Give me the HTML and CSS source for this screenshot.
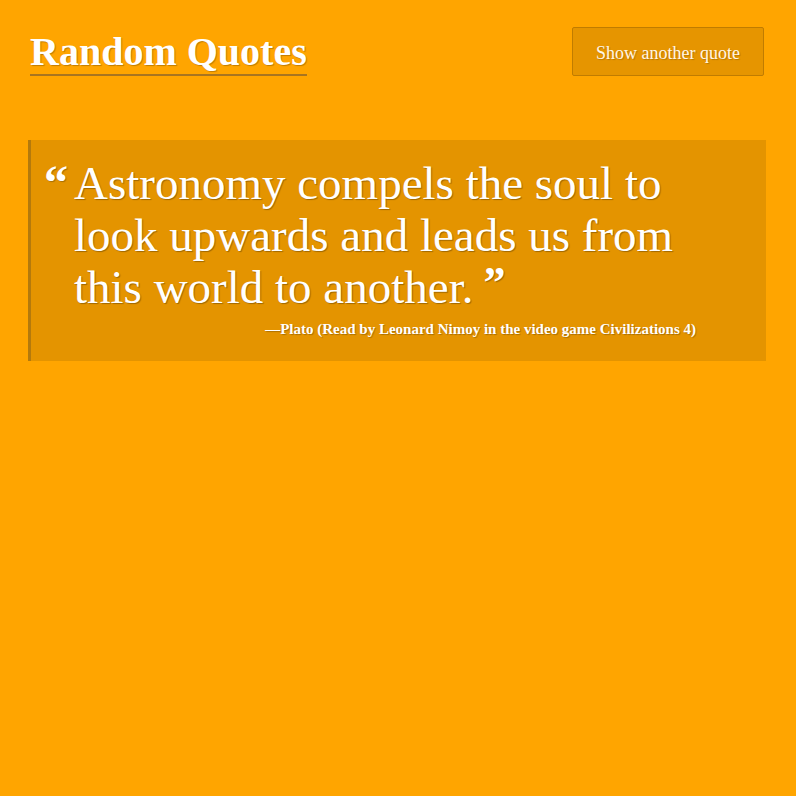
FILE: index.html
```html
<!DOCTYPE html>
<html lang="en">
<head>
<meta charset="utf-8">
<title>Random Quotes</title>
<link rel="stylesheet" href="styles.css">
</head>
<body>
<header class="top">
  <h1 class="title">Random Quotes</h1>
  <button class="btn">Show another quote</button>
</header>
<main>
  <blockquote class="card">
    <div class="open">&ldquo;</div>
    <div class="body">
      <p class="text"><span class="words">Astronomy compels the soul to look upwards and leads us from this world to another.</span><span class="close">&rdquo;</span></p>
      <p class="cite">&mdash;Plato (Read by Leonard Nimoy in the video game Civilizations 4)</p>
    </div>
  </blockquote>
</main>
</body>
</html>
```
FILE: styles.css
```css
* { box-sizing: border-box; }
html, body { margin: 0; padding: 0; }
body {
  background: #ffa500;
  font-family: "Liberation Serif", "Times New Roman", serif;
  color: #fff;
  width: 796px;
  height: 796px;
}
.top {
  display: flex;
  justify-content: space-between;
  align-items: flex-start;
  height: 76px;
  padding: 27px 32px 0 30px;
}
.title {
  margin: 4px 0 0 0;
  font-size: 40px;
  font-weight: bold;
  line-height: 41px;
  color: #fff;
  border-bottom: 2px solid #a87520;
  padding-bottom: 2px;
  text-shadow: 1px 1px 1px rgba(0,0,0,0.25);
}
.btn {
  width: 192px;
  height: 49px;
  background: #e69500;
  border: 1px solid #c07c00;
  border-radius: 2px;
  color: #fff6e6;
  font-family: "Liberation Serif", serif;
  font-size: 18px;
  text-shadow: 1px 1px 1px rgba(0,0,0,0.2);
  padding: 3px 0 0 0;
}
.card {
  margin: 64px 30px 0 28px;
  background: #e49400;
  border-left: 3px solid #b47a0c;
  display: flex;
  padding: 17px 70px 21px 13px;
}
.open {
  width: 30px;
  flex: none;
  font-size: 48px;
  font-weight: bold;
  line-height: 52px;
  height: 40px;
  text-shadow: 1px 1px 1px rgba(0,0,0,0.25);
}
.body { flex: 1; }
.text {
  margin: 0;
  font-size: 47px;
  line-height: 52px;
  text-shadow: 1px 1px 1px rgba(0,0,0,0.3);
}
.close {
  display: inline-block;
  font-size: 44px;
  font-weight: bold;
  margin-left: 10px;
  line-height: 30px;
  vertical-align: 6px;
}
.cite {
  margin: 5px 0 0 0;
  text-align: right;
  font-size: 15px;
  font-weight: bold;
  line-height: 22px;
  text-shadow: 1px 1px 1px rgba(0,0,0,0.25);
}
```
